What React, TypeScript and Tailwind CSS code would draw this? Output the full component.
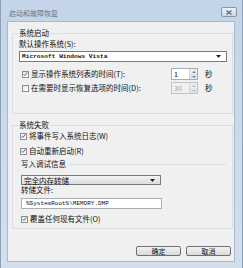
import React from "react";

const font = { fontFamily: '"Noto Sans CJK SC", "Noto Sans", sans-serif' };

function Check({ checked = true }: { checked?: boolean }) {
  return (
    <span className="w-[7px] h-[7px] border border-[#8f8f8f] bg-gradient-to-br from-[#e6e6e6] to-white flex items-center justify-center shrink-0">
      {checked && (
        <svg width="6" height="6" viewBox="0 0 6 6">
          <path d="M0.8 3.2 L2.3 4.8 L5.3 0.9" fill="none" stroke="#4a5f97" strokeWidth="1.1" />
        </svg>
      )}
    </span>
  );
}

function Arrow() {
  return (
    <svg width="5" height="3" viewBox="0 0 5 3">
      <path d="M0 0 H5 L2.5 3 Z" fill="#222" />
    </svg>
  );
}

function Spinner({ value, disabled = false }: { value: string; disabled?: boolean }) {
  return (
    <div className={`w-[27px] h-[12px] border flex ${disabled ? "border-[#c4c4c4] bg-[#f0f0f0]" : "border-[#abadb3] bg-white"}`}>
      <span className={`flex-1 text-[7px] leading-[10px] pl-[2px] ${disabled ? "text-[#a0a0a0]" : "text-black"}`}>{value}</span>
      <div className="w-[8px] flex flex-col border-l border-[#d0d7e0]">
        <div className="flex-1 bg-[#e8edf3] flex items-center justify-center">
          <svg width="4" height="2" viewBox="0 0 4 2"><path d="M0 2 L2 0 L4 2 Z" fill={disabled ? "#bbb" : "#7a8aa0"} /></svg>
        </div>
        <div className="flex-1 bg-[#dfe5ec] flex items-center justify-center">
          <svg width="4" height="2" viewBox="0 0 4 2"><path d="M0 0 L2 2 L4 0 Z" fill={disabled ? "#bbb" : "#7a8aa0"} /></svg>
        </div>
      </div>
    </div>
  );
}

export default function App() {
  return (
    <div
      className="w-[243px] h-[268px] bg-gradient-to-b from-[#c4d5e9] to-[#d3dfec] border-l border-r border-[#8da0b6] flex flex-col text-[#111] text-[7.5px] leading-[10px]"
      style={font}
    >
      {/* title bar */}
      <div className="h-[21px] flex items-start shrink-0">
        <span className="ml-[8px] mt-[9px] text-[7px] leading-[9px] text-[#6a7480]">启动和故障恢复</span>
        <div className="ml-auto mr-[5px] mt-[7px] w-[16px] h-[10px] rounded-[2px] border border-[#8a96a6] bg-gradient-to-b from-[#eef2f7] to-[#cdd6e1] flex items-center justify-center">
          <svg width="6" height="5" viewBox="0 0 6 5">
            <path d="M0.5 0.5 L5.5 4.5 M5.5 0.5 L0.5 4.5" stroke="#5b6675" strokeWidth="1.2" />
          </svg>
        </div>
      </div>

      {/* client area */}
      <div className="ml-[6px] mr-[7px] h-[241px] bg-[#f0f0f0] border border-[#a9b8ca] flex flex-col shrink-0">
        {/* group 1 */}
        <div className="relative mt-[11px] ml-[4px] w-[221px] h-[81px] border border-[#d5dfe5] pl-[6px] pt-[5px] flex flex-col">
          <span className="absolute -top-[6px] left-[5px] px-[1px] bg-[#f0f0f0]">系统启动</span>
          <span>默认操作系统(S):</span>
          <div className="mt-[2px] w-[208px] h-[11px] border border-[#7a7a7a] bg-white flex items-center pl-[2px] pr-[5px]">
            <span className="font-bold text-[6.2px] leading-[9px]" style={{ fontFamily: '"Liberation Mono", monospace' }}>
              Microsoft Windows Vista
            </span>
            <span className="ml-auto"><Arrow /></span>
          </div>
          <div className="mt-[6px] h-[12px] flex items-center">
            <span className="ml-[3px]"><Check /></span>
            <span className="ml-[2px] w-[140px]">显示操作系统列表的时间(T):</span>
            <Spinner value="1" />
            <span className="ml-[7px]">秒</span>
          </div>
          <div className="mt-[2px] h-[12px] flex items-center">
            <span className="ml-[3px]"><Check checked={false} /></span>
            <span className="ml-[2px] w-[140px]">在需要时显示恢复选项的时间(D):</span>
            <Spinner value="30" disabled />
            <span className="ml-[7px]">秒</span>
          </div>
        </div>

        {/* group 2 */}
        <div className="relative mt-[11px] ml-[4px] w-[221px] h-[104px] border border-[#d5dfe5] pl-[7px] pt-[5px] flex flex-col">
          <span className="absolute -top-[6px] left-[5px] px-[1px] bg-[#f0f0f0]">系统失败</span>
          <div className="h-[10px] flex items-center">
            <Check />
            <span className="ml-[2px]">将事件写入系统日志(W)</span>
          </div>
          <div className="mt-[5px] h-[10px] flex items-center">
            <Check />
            <span className="ml-[2px]">自动重新启动(R)</span>
          </div>
          <div className="mt-[3px] h-[10px] flex items-center ml-[1px]">
            <span>写入调试信息</span>
            <div className="ml-[3px] w-[157px] h-px bg-[#d5dfe5]" />
          </div>
          <div className="mt-[6px] ml-[1px] w-[140px] h-[10px] border border-[#7a7a7a] bg-gradient-to-b from-[#f4f4f4] to-[#dcdcdc] flex items-center pl-[2px] pr-[5px]">
            <span className="text-[7.5px] leading-[9px]">完全内存转储</span>
            <span className="ml-auto"><Arrow /></span>
          </div>
          <span className="ml-[1px]">转储文件:</span>
          <div className="mt-[3px] ml-[1px] w-[141px] h-[11px] border border-[#abadb3] bg-white flex items-center pl-[4px]">
            <span className="text-[6px] leading-[9px]" style={{ fontFamily: '"Liberation Mono", monospace' }}>
              %SystemRoot%\MEMORY.DMP
            </span>
          </div>
          <div className="mt-[5px] h-[10px] flex items-center ml-[1px]">
            <Check />
            <span className="ml-[2px]">覆盖任何现有文件(O)</span>
          </div>
        </div>

        {/* buttons */}
        <div className="mt-[17px] ml-auto mr-[3px] flex gap-[5px]">
          <button className="w-[45px] h-[10px] rounded-[2px] border border-[#707070] bg-gradient-to-b from-[#f2f2f2] to-[#dadada] text-[7px] leading-[8px] flex items-center justify-center">
            确定
          </button>
          <button className="w-[45px] h-[10px] rounded-[2px] border border-[#707070] bg-gradient-to-b from-[#f2f2f2] to-[#dadada] text-[7px] leading-[8px] flex items-center justify-center">
            取消
          </button>
        </div>
      </div>
    </div>
  );
}
